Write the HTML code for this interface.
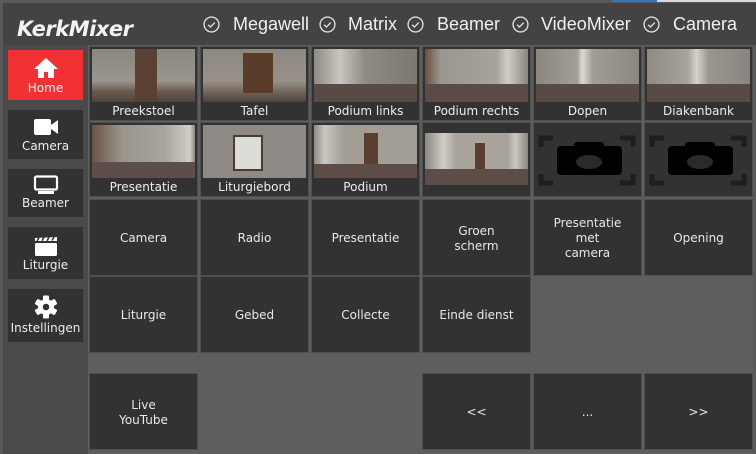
<!DOCTYPE html>
<html><head><meta charset="utf-8"><style>
*{margin:0;padding:0;box-sizing:border-box}
body{width:756px;height:454px;background:#595959;font-family:"DejaVu Sans","Liberation Sans",sans-serif;color:#e8e8e8;position:relative;overflow:hidden}
#hdr{position:absolute;left:3px;top:3px;width:753px;height:42px;background:#434343}
#logo{position:absolute;left:14px;top:14px;font:italic bold 21px "DejaVu Sans",sans-serif;color:#f2f2f2;letter-spacing:-0.5px}
.st{position:absolute;top:14px;font:18px "Liberation Sans",sans-serif;color:#f0f0f0;white-space:nowrap}
.ic{position:absolute;top:16px}
#side{position:absolute;left:3px;top:45px;width:85px;height:409px;background:#4a4a4a}
.sb{position:absolute;left:8px;width:75px;background:#323232;text-align:center;font-size:12px;color:#eee}
.sb svg{display:block;margin:0 auto}
#main{position:absolute;left:88px;top:45px;width:665px;height:409px;background:#5e5e5e}
.c{position:absolute;width:109px;background:#323232;border:1px solid #4f4f4f;font-size:12px;color:#e8e8e8;text-align:center;display:flex;align-items:center;justify-content:center;line-height:15px;padding-top:2px}
.t{position:absolute;width:109px;height:75px;background:#323232;border:1px solid #4f4f4f}
.t .im{position:absolute;left:2px;top:2px;right:2px;height:53px}
.t .lb{position:absolute;left:0;right:0;bottom:2px;text-align:center;font-size:12px;color:#eee}
</style></head><body>
<div style="position:absolute;left:612px;top:0;width:45px;height:2px;background:#2a78c8"></div>
<div style="position:absolute;left:657px;top:0;width:99px;height:2px;background:#d8d8d8"></div>
<div id="hdr">
<div id="logo">KerkMixer</div>
</div>
<svg class="ic" style="left:203px" width="17" height="17" viewBox="0 0 16 16"><circle cx="8" cy="8" r="7" fill="none" stroke="#ddd" stroke-width="1.3"/><path d="M4.8 8.2l2.2 2.2 4-4.2" fill="none" stroke="#ddd" stroke-width="1.3"/></svg><div class="st" style="left:233px">Megawell</div>
<svg class="ic" style="left:319px" width="17" height="17" viewBox="0 0 16 16"><circle cx="8" cy="8" r="7" fill="none" stroke="#ddd" stroke-width="1.3"/><path d="M4.8 8.2l2.2 2.2 4-4.2" fill="none" stroke="#ddd" stroke-width="1.3"/></svg><div class="st" style="left:348px">Matrix</div>
<svg class="ic" style="left:407px" width="17" height="17" viewBox="0 0 16 16"><circle cx="8" cy="8" r="7" fill="none" stroke="#ddd" stroke-width="1.3"/><path d="M4.8 8.2l2.2 2.2 4-4.2" fill="none" stroke="#ddd" stroke-width="1.3"/></svg><div class="st" style="left:437px">Beamer</div>
<svg class="ic" style="left:512px" width="17" height="17" viewBox="0 0 16 16"><circle cx="8" cy="8" r="7" fill="none" stroke="#ddd" stroke-width="1.3"/><path d="M4.8 8.2l2.2 2.2 4-4.2" fill="none" stroke="#ddd" stroke-width="1.3"/></svg><div class="st" style="left:541px">VideoMixer</div>
<svg class="ic" style="left:643px" width="17" height="17" viewBox="0 0 16 16"><circle cx="8" cy="8" r="7" fill="none" stroke="#ddd" stroke-width="1.3"/><path d="M4.8 8.2l2.2 2.2 4-4.2" fill="none" stroke="#ddd" stroke-width="1.3"/></svg><div class="st" style="left:673px">Camera</div>

<div id="side"></div>
<div class="sb" style="top:50px;height:50px;background:#f23232"><svg width="26" height="24" viewBox="0 0 26 24" style="margin-top:6px"><path d="M13 2L1 13h4v9h6v-6h4v6h6v-9h4z" fill="#fff"/></svg><div style="margin-top:1px">Home</div></div>
<div class="sb" style="top:110px;height:49px"><svg width="26" height="18" viewBox="0 0 26 18" style="margin-top:8px"><rect x="1" y="1" width="17" height="16" rx="2" fill="#fff"/><path d="M18 7l7-5v14l-7-5z" fill="#fff"/></svg><div style="margin-top:3px">Camera</div></div>
<div class="sb" style="top:169px;height:48px"><svg width="26" height="20" viewBox="0 0 26 20" style="margin-top:6px"><rect x="2" y="1.5" width="22" height="13" rx="1.5" fill="none" stroke="#fff" stroke-width="2.2"/><rect x="5" y="16" width="16" height="3" fill="#fff"/></svg><div style="margin-top:1px">Beamer</div></div>
<div class="sb" style="top:227px;height:52px"><svg width="26" height="22" viewBox="0 0 26 22" style="margin-top:8px"><path d="M2 3l22-1v4H2z" fill="#fff"/><path d="M6 2.5l-2 3.5M11 2.3l-2 3.5M16 2.2l-2 3.5M21 2l-2 3.5" stroke="#323232" stroke-width="1.5"/><rect x="2" y="8" width="22" height="13" rx="1.5" fill="#fff"/></svg><div style="margin-top:1px">Liturgie</div></div>
<div class="sb" style="top:289px;height:53px"><svg width="24" height="24" viewBox="0 0 24 24" style="margin-top:6px"><g fill="#fff" transform="translate(12 12)"><circle r="8"/><rect x="-3" y="-11.5" width="6" height="23" rx="1"/><rect x="-3" y="-11.5" width="6" height="23" rx="1" transform="rotate(60)"/><rect x="-3" y="-11.5" width="6" height="23" rx="1" transform="rotate(120)"/><circle r="3.3" fill="#323232"/></g></svg><div style="margin-top:2px">Instellingen</div></div>

<div id="main"></div>

<div class="t" style="left:89px;top:46px"><div class="im" style="background:linear-gradient(180deg,#8a8680 0%,#9a968e 60%,#6a5a4e 80%,#4e4440 100%)"><div style="position:absolute;left:43px;top:0;width:22px;height:53px;background:#5a4030"></div></div><div class="lb">Preekstoel</div></div>
<div class="t" style="left:200px;top:46px"><div class="im" style="background:linear-gradient(180deg,#8c8882 0%,#979189 60%,#6c5e52 85%,#4a4240 100%)"><div style="position:absolute;left:40px;top:4px;width:30px;height:40px;background:#5a3c2a"></div></div><div class="lb">Tafel</div></div>
<div class="t" style="left:311px;top:46px"><div class="im" style="background:linear-gradient(90deg,#8e8a84 0%,#c8c6c0 25%,#8e8a84 50%,#7c7770 100%)"><div style="position:absolute;left:0;right:0;bottom:0;height:18px;background:#5a4a44"></div></div><div class="lb">Podium links</div></div>
<div class="t" style="left:422px;top:46px"><div class="im" style="background:linear-gradient(90deg,#6a5040 0%,#9a968e 15%,#a8a49c 70%,#d0cec8 80%,#8a867e 100%)"><div style="position:absolute;left:0;right:0;bottom:0;height:18px;background:#5c4a46"></div></div><div class="lb">Podium rechts</div></div>
<div class="t" style="left:533px;top:46px"><div class="im" style="background:linear-gradient(90deg,#8a8680 0%,#a29e96 40%,#dcdad4 45%,#a29e96 55%,#8a8680 100%)"><div style="position:absolute;left:0;right:0;bottom:0;height:18px;background:#5a4a46"></div></div><div class="lb">Dopen</div></div>
<div class="t" style="left:644px;top:46px"><div class="im" style="background:linear-gradient(90deg,#8e8a84 0%,#a8a49c 40%,#d4d2cc 48%,#9a968e 60%,#888480 100%)"><div style="position:absolute;left:0;right:0;bottom:0;height:18px;background:#5a4a46"></div></div><div class="lb">Diakenbank</div></div>
<div class="t" style="left:89px;top:122px"><div class="im" style="background:linear-gradient(90deg,#6a5444 0%,#9a968e 30%,#a8a49c 70%,#d0cec8 95%,#8a867e 100%)"><div style="position:absolute;left:0;right:0;bottom:0;height:16px;background:#5e4e4a"></div></div><div class="lb">Presentatie</div></div>
<div class="t" style="left:200px;top:122px"><div class="im" style="background:#8e8984"><div style="position:absolute;left:30px;top:10px;width:30px;height:36px;background:#dcdcd6;border:2px solid #4a3c34"></div></div><div class="lb">Liturgiebord</div></div>
<div class="t" style="left:311px;top:122px"><div class="im" style="background:linear-gradient(90deg,#8e8a84 0%,#c8c6c0 10%,#a29e96 30%,#a29e96 100%)"><div style="position:absolute;left:50px;top:8px;width:14px;height:32px;background:#5a3e2e"></div><div style="position:absolute;left:0;right:0;bottom:0;height:14px;background:#5e4c46"></div></div><div class="lb">Podium</div></div>
<div class="t" style="left:422px;top:122px"><div class="im" style="top:10px;height:52px;background:linear-gradient(90deg,#8a8680 0%,#d0cec8 18%,#a8a49c 30%,#a8a49c 80%,#c8c6c0 88%,#8a8680 100%)"><div style="position:absolute;left:50px;top:10px;width:10px;height:26px;background:#5a3e2e"></div><div style="position:absolute;left:0;right:0;bottom:0;height:16px;background:#5e4c46"></div></div></div>
<div class="t" style="left:533px;top:122px"><svg width="107" height="73" viewBox="0 0 107 73"><g fill="none" stroke="#1e1e1e" stroke-width="5"><path d="M19 15H7v9M86 15h13v9M7 51v9h12M99 51v9H86"/></g><rect x="23" y="23" width="65" height="29" rx="4" fill="#000"/><rect x="40" y="19" width="30" height="6" rx="3" fill="#000"/><ellipse cx="55" cy="39" rx="13" ry="7" fill="#2a2a2a"/></svg></div>
<div class="t" style="left:644px;top:122px"><svg width="107" height="73" viewBox="0 0 107 73"><g fill="none" stroke="#1e1e1e" stroke-width="5"><path d="M19 15H7v9M86 15h13v9M7 51v9h12M99 51v9H86"/></g><rect x="23" y="23" width="65" height="29" rx="4" fill="#000"/><rect x="40" y="19" width="30" height="6" rx="3" fill="#000"/><ellipse cx="55" cy="39" rx="13" ry="7" fill="#2a2a2a"/></svg></div>
<div class="c" style="left:89px;top:199px;height:77px">Camera</div>
<div class="c" style="left:200px;top:199px;height:77px">Radio</div>
<div class="c" style="left:311px;top:199px;height:77px">Presentatie</div>
<div class="c" style="left:422px;top:199px;height:77px">Groen<br>scherm</div>
<div class="c" style="left:533px;top:199px;height:77px">Presentatie<br>met<br>camera</div>
<div class="c" style="left:644px;top:199px;height:77px">Opening</div>
<div class="c" style="left:89px;top:276px;height:77px">Liturgie</div>
<div class="c" style="left:200px;top:276px;height:77px">Gebed</div>
<div class="c" style="left:311px;top:276px;height:77px">Collecte</div>
<div class="c" style="left:422px;top:276px;height:77px">Einde dienst</div>
<div class="c" style="left:89px;top:373px;height:77px">Live<br>YouTube</div>
<div class="c" style="left:422px;top:373px;height:77px">&lt;&lt;</div>
<div class="c" style="left:533px;top:373px;height:77px">...</div>
<div class="c" style="left:644px;top:373px;height:77px">&gt;&gt;</div>
</body></html>
